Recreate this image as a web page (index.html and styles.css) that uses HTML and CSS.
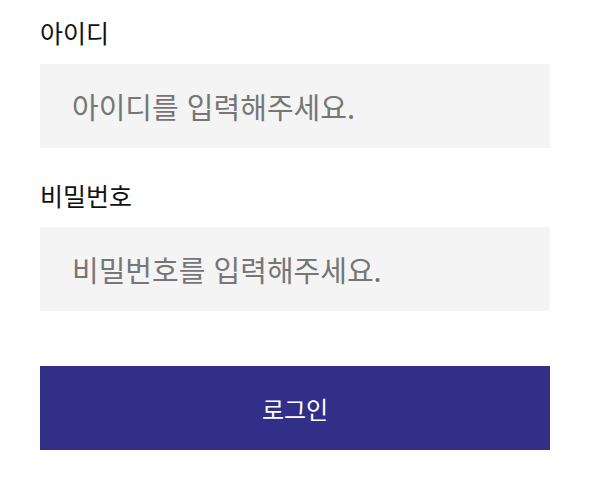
FILE: index.html
```html
<!DOCTYPE html>
<html lang="ko">
<head>
<meta charset="utf-8">
<link rel="stylesheet" href="styles.css">
</head>
<body>
<form class="login">
  <label class="field">
    <span class="label">아이디</span>
    <input class="input" type="text" placeholder="아이디를 입력해주세요.">
  </label>
  <label class="field">
    <span class="label">비밀번호</span>
    <input class="input" type="password" placeholder="비밀번호를 입력해주세요.">
  </label>
  <button class="submit" type="button">로그인</button>
</form>
</body>
</html>
```

FILE: styles.css
```css
html, body {
  margin: 0;
  background: #ffffff;
}
body {
  font-family: "Noto Sans CJK KR", "Noto Sans", sans-serif;
}
.login {
  width: 510px;
  padding: 14px 40px 0;
  display: flex;
  flex-direction: column;
}
.field {
  display: flex;
  flex-direction: column;
  gap: 14px;
  margin-bottom: 29px;
}
.label {
  font-size: 25px;
  line-height: 36px;
  color: #111111;
}
.input {
  box-sizing: border-box;
  height: 84px;
  border: none;
  outline: none;
  background: #f4f4f4;
  padding: 0 32px;
  font-family: inherit;
  font-size: 29px;
  color: #222;
}
.input::placeholder {
  color: #767676;
}
.submit {
  margin-top: 26px;
  height: 84px;
  border: none;
  background: #312f87;
  color: #ffffff;
  font-family: inherit;
  font-size: 24px;
}
```
